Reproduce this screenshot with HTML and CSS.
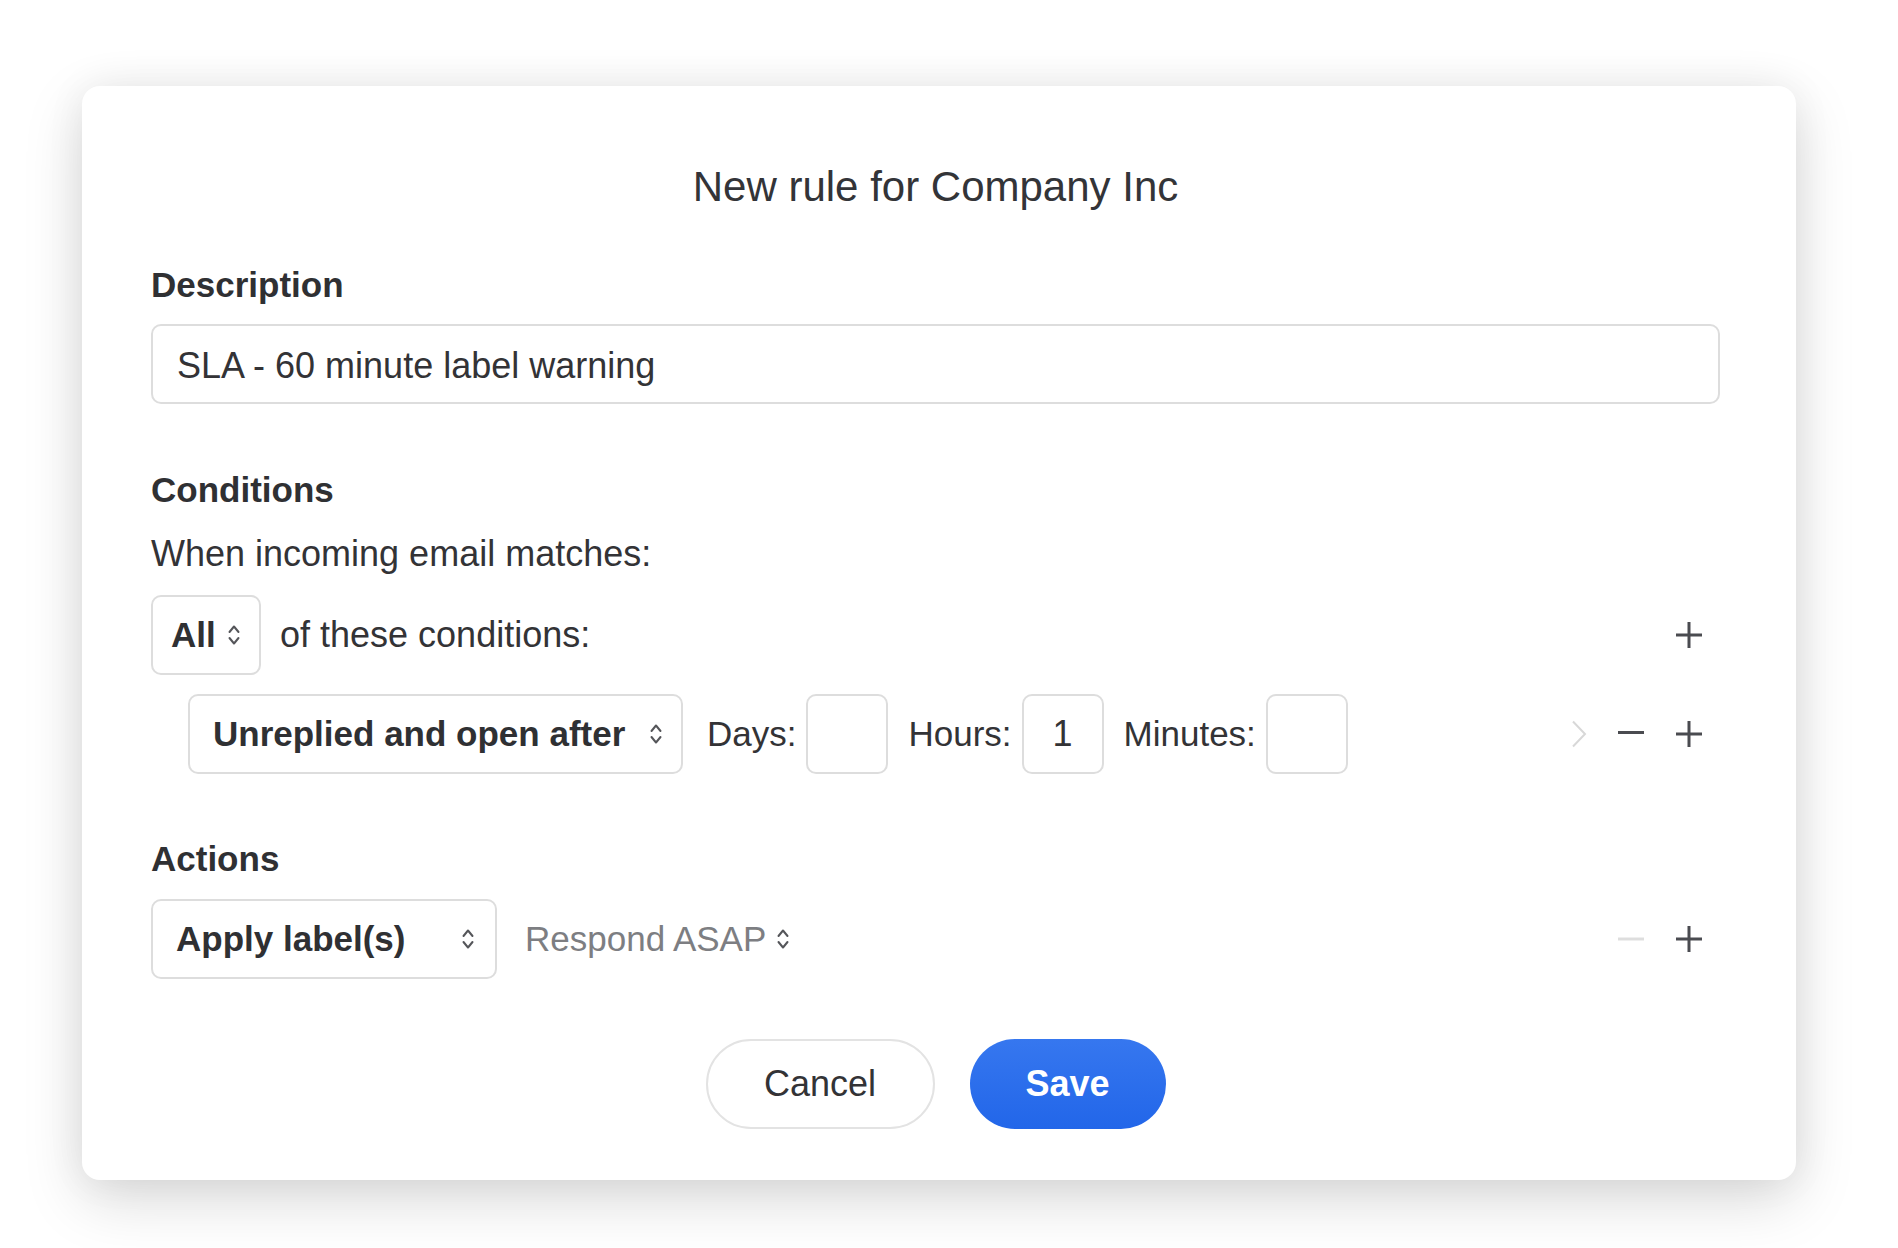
FILE: index.html
```html
<!DOCTYPE html>
<html lang="en">
<head>
<meta charset="utf-8">
<title>New rule for Company Inc</title>
<link rel="stylesheet" href="styles.css">
</head>
<body>
<div class="dialog">
  <h1 class="title">New rule for Company Inc</h1>

  <label class="section-label label-desc" for="desc">Description</label>
  <input id="desc" class="text-input" type="text" value="SLA - 60 minute label warning">

  <h2 class="section-label label-cond">Conditions</h2>
  <p class="intro">When incoming email matches:</p>

  <div class="row row-all">
    <div class="select select-all">
      <span>All</span>
      <svg class="updown" width="14" height="26" viewBox="0 0 14 26"><path d="M2.5 10l4.5-5.5 4.5 5.5M2.5 16l4.5 5.5 4.5-5.5"/></svg>
    </div>
    <span class="row-text">of these conditions:</span>
    <div class="row-icons">
      <svg class="icon" width="28" height="28" viewBox="0 0 28 28"><path d="M14 1v26M1 14h26"/></svg>
    </div>
  </div>

  <div class="row row-cond">
    <div class="select select-cond">
      <span>Unreplied and open after</span>
      <svg class="updown" width="14" height="26" viewBox="0 0 14 26"><path d="M2.5 10l4.5-5.5 4.5 5.5M2.5 16l4.5 5.5 4.5-5.5"/></svg>
    </div>
    <span class="field-label first">Days:</span>
    <div class="num-box"></div>
    <span class="field-label">Hours:</span>
    <div class="num-box">1</div>
    <span class="field-label">Minutes:</span>
    <div class="num-box"></div>
    <div class="row-icons">
      <svg class="chev" width="16" height="28" viewBox="0 0 16 28"><path d="M2 1.5L14 14 2 26.5"/></svg>
      <svg class="icon icon-minus" width="28" height="28" viewBox="0 0 28 28"><path d="M1 12.5h26"/></svg>
      <svg class="icon" width="28" height="28" viewBox="0 0 28 28"><path d="M14 1v26M1 14h26"/></svg>
    </div>
  </div>

  <h2 class="section-label label-actions">Actions</h2>

  <div class="row row-action">
    <div class="select select-action">
      <span>Apply label(s)</span>
      <svg class="updown" width="14" height="26" viewBox="0 0 14 26"><path d="M2.5 10l4.5-5.5 4.5 5.5M2.5 16l4.5 5.5 4.5-5.5"/></svg>
    </div>
    <div class="respond">
      <span>Respond ASAP</span>
      <svg class="updown" width="14" height="26" viewBox="0 0 14 26"><path d="M2.5 10l4.5-5.5 4.5 5.5M2.5 16l4.5 5.5 4.5-5.5"/></svg>
    </div>
    <div class="row-icons">
      <svg class="icon icon-minus disabled" width="28" height="28" viewBox="0 0 28 28"><path d="M1 14h26"/></svg>
      <svg class="icon" width="28" height="28" viewBox="0 0 28 28"><path d="M14 1v26M1 14h26"/></svg>
    </div>
  </div>

  <div class="buttons">
    <button class="btn btn-cancel" type="button">Cancel</button>
    <button class="btn btn-save" type="button">Save</button>
  </div>
</div>
</body>
</html>
```
FILE: styles.css
```css
html, body {
  margin: 0;
  padding: 0;
  background: #ffffff;
}

body {
  font-family: "Liberation Sans", Arial, sans-serif;
  color: #2e2f32;
  padding-top: 86px;
  padding-bottom: 68px;
  min-height: 1248px;
  box-sizing: border-box;
}

.dialog {
  margin-left: 82px;
  width: 1714px;
  box-sizing: border-box;
  padding: 76px 76px 51px 69px;
  background: #ffffff;
  border-radius: 18px;
  box-shadow: 0 20px 60px rgba(0, 0, 0, 0.15), 0 0 40px rgba(0, 0, 0, 0.06);
  display: flex;
  flex-direction: column;
}

.title {
  margin: 0;
  text-align: center;
  font-size: 42px;
  line-height: 50px;
  font-weight: 400;
  color: #333438;
}

.section-label {
  display: block;
  margin: 0;
  font-size: 35px;
  line-height: 40px;
  font-weight: 700;
  color: #2f3033;
}

.label-desc { margin-top: 53px; }
.label-cond { margin-top: 66px; }
.label-actions { margin-top: 65px; }

.text-input {
  display: block;
  margin-top: 19px;
  width: 100%;
  height: 80px;
  box-sizing: border-box;
  border: 2px solid #dddddd;
  border-radius: 10px;
  padding: 4px 24px 0;
  font-family: "Liberation Sans", Arial, sans-serif;
  font-size: 36px;
  color: #333336;
  background: #fff;
  outline: none;
}

.intro {
  margin: 24px 0 0;
  font-size: 36px;
  line-height: 40px;
  color: #333336;
}

.row {
  display: flex;
  align-items: center;
  height: 80px;
  padding-right: 17px;
}

.row-all { margin-top: 21px; }
.row-cond { margin-top: 19px; margin-left: 37px; }
.row-action { margin-top: 20px; }

.select {
  display: flex;
  align-items: center;
  justify-content: space-between;
  height: 80px;
  box-sizing: border-box;
  border: 2px solid #dddddd;
  border-radius: 10px;
  font-size: 35px;
  font-weight: 700;
  color: #2f3033;
}

.select-all { width: 110px; padding: 0 18px 0 18px; }
.select-cond { width: 495px; padding: 0 18px 0 23px; }
.select-action { width: 346px; padding: 0 20px 0 23px; }

.updown path {
  fill: none;
  stroke: #55565a;
  stroke-width: 2;
  stroke-linecap: round;
  stroke-linejoin: round;
}

.row-text {
  margin-left: 19px;
  font-size: 36px;
  line-height: 40px;
  color: #333336;
}

.field-label {
  margin-left: 20px;
  font-size: 35px;
  line-height: 40px;
  color: #333336;
}

.field-label.first { margin-left: 24px; }

.num-box {
  margin-left: 10px;
  width: 82px;
  height: 80px;
  box-sizing: border-box;
  border: 2px solid #dddddd;
  border-radius: 10px;
  display: flex;
  align-items: center;
  justify-content: center;
  font-size: 36px;
  color: #333336;
}

.row-icons {
  margin-left: auto;
  display: flex;
  align-items: center;
  gap: 30px;
}

.icon path {
  fill: none;
  stroke: #4a4b50;
  stroke-width: 3;
}

.icon.disabled path { stroke: #dedede; }

.chev path {
  fill: none;
  stroke: #d8d8d8;
  stroke-width: 2;
}

.respond {
  margin-left: 28px;
  display: flex;
  align-items: center;
  gap: 10px;
  font-size: 35px;
  color: #7d7e82;
}

.buttons {
  margin-top: 60px;
  display: flex;
  justify-content: center;
  gap: 35px;
}

.btn {
  height: 90px;
  border-radius: 45px;
  box-sizing: border-box;
  font-family: "Liberation Sans", Arial, sans-serif;
  font-size: 36px;
  cursor: pointer;
  padding: 0;
}

.btn-cancel {
  width: 229px;
  border: 2px solid #e3e3e3;
  background: #ffffff;
  color: #333336;
}

.btn-save {
  width: 196px;
  border: none;
  background: linear-gradient(#3677ef, #2266e9);
  color: #ffffff;
  font-weight: 700;
}
```
